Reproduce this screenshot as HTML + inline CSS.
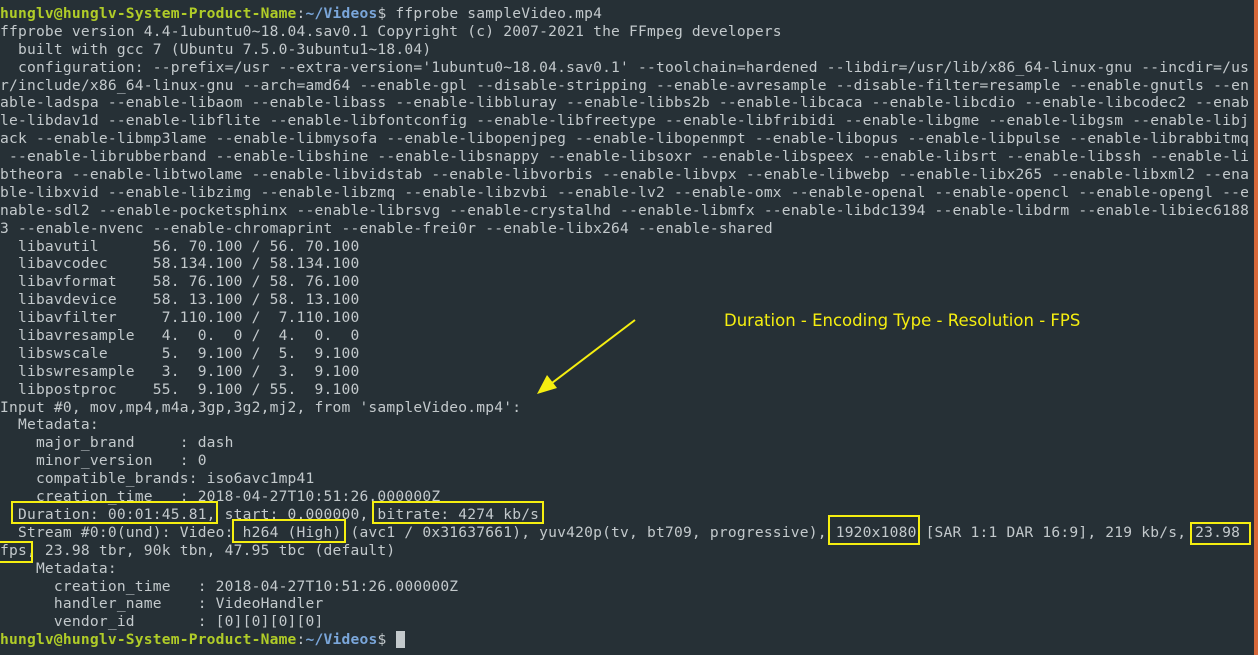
<!DOCTYPE html>
<html><head><meta charset="utf-8"><style>
html,body{margin:0;padding:0;}
body{width:1258px;height:655px;background:#263036;position:relative;overflow:hidden;}
.t{position:absolute;left:0;top:5px;font-family:"DejaVu Sans Mono","Liberation Mono",monospace;font-size:14.6px;line-height:17.9px;color:#c3c9cc;letter-spacing:0.2px;}
.t div{height:17.9px;white-space:pre;}
.u{color:#b0cc28;font-weight:bold;}
.p{color:#7aa6da;font-weight:bold;}
.b{position:absolute;border:2px solid #f5ee10;box-sizing:border-box;}
.edge{position:absolute;right:0;top:0;width:4px;height:655px;background:#d9693a;}
.note{position:absolute;left:724px;top:311px;font-family:"DejaVu Sans","Liberation Sans",sans-serif;font-size:16.5px;color:#f5ee10;white-space:nowrap;}
.cur{position:absolute;left:396px;top:631px;width:9px;height:17px;background:#c3c9cc;}
</style></head><body>
<div class="t"><div><span class="u">hunglv@hunglv-System-Product-Name</span>:<span class="p">~/Videos</span>$ ffprobe sampleVideo.mp4</div><div>ffprobe version 4.4-1ubuntu0~18.04.sav0.1 Copyright (c) 2007-2021 the FFmpeg developers</div><div>  built with gcc 7 (Ubuntu 7.5.0-3ubuntu1~18.04)</div><div>  configuration: --prefix=/usr --extra-version='1ubuntu0~18.04.sav0.1' --toolchain=hardened --libdir=/usr/lib/x86_64-linux-gnu --incdir=/us</div><div>r/include/x86_64-linux-gnu --arch=amd64 --enable-gpl --disable-stripping --enable-avresample --disable-filter=resample --enable-gnutls --en</div><div>able-ladspa --enable-libaom --enable-libass --enable-libbluray --enable-libbs2b --enable-libcaca --enable-libcdio --enable-libcodec2 --enab</div><div>le-libdav1d --enable-libflite --enable-libfontconfig --enable-libfreetype --enable-libfribidi --enable-libgme --enable-libgsm --enable-libj</div><div>ack --enable-libmp3lame --enable-libmysofa --enable-libopenjpeg --enable-libopenmpt --enable-libopus --enable-libpulse --enable-librabbitmq</div><div> --enable-librubberband --enable-libshine --enable-libsnappy --enable-libsoxr --enable-libspeex --enable-libsrt --enable-libssh --enable-li</div><div>btheora --enable-libtwolame --enable-libvidstab --enable-libvorbis --enable-libvpx --enable-libwebp --enable-libx265 --enable-libxml2 --ena</div><div>ble-libxvid --enable-libzimg --enable-libzmq --enable-libzvbi --enable-lv2 --enable-omx --enable-openal --enable-opencl --enable-opengl --e</div><div>nable-sdl2 --enable-pocketsphinx --enable-librsvg --enable-crystalhd --enable-libmfx --enable-libdc1394 --enable-libdrm --enable-libiec6188</div><div>3 --enable-nvenc --enable-chromaprint --enable-frei0r --enable-libx264 --enable-shared</div><div>  libavutil      56. 70.100 / 56. 70.100</div><div>  libavcodec     58.134.100 / 58.134.100</div><div>  libavformat    58. 76.100 / 58. 76.100</div><div>  libavdevice    58. 13.100 / 58. 13.100</div><div>  libavfilter     7.110.100 /  7.110.100</div><div>  libavresample   4.  0.  0 /  4.  0.  0</div><div>  libswscale      5.  9.100 /  5.  9.100</div><div>  libswresample   3.  9.100 /  3.  9.100</div><div>  libpostproc    55.  9.100 / 55.  9.100</div><div>Input #0, mov,mp4,m4a,3gp,3g2,mj2, from 'sampleVideo.mp4':</div><div>  Metadata:</div><div>    major_brand     : dash</div><div>    minor_version   : 0</div><div>    compatible_brands: iso6avc1mp41</div><div>    creation_time   : 2018-04-27T10:51:26.000000Z</div><div>  Duration: 00:01:45.81, start: 0.000000, bitrate: 4274 kb/s</div><div>  Stream #0:0(und): Video: h264 (High) (avc1 / 0x31637661), yuv420p(tv, bt709, progressive), 1920x1080 [SAR 1:1 DAR 16:9], 219 kb/s, 23.98</div><div>fps, 23.98 tbr, 90k tbn, 47.95 tbc (default)</div><div>    Metadata:</div><div>      creation_time   : 2018-04-27T10:51:26.000000Z</div><div>      handler_name    : VideoHandler</div><div>      vendor_id       : [0][0][0][0]</div><div><span class="u">hunglv@hunglv-System-Product-Name</span>:<span class="p">~/Videos</span>$ </div></div>
<div class="cur"></div>
<div class="b" style="left:11px;top:501px;width:207px;height:23px"></div>
<div class="b" style="left:372px;top:501px;width:172px;height:23px"></div>
<div class="b" style="left:232px;top:519px;width:114px;height:24px"></div>
<div class="b" style="left:828px;top:515px;width:92px;height:30px"></div>
<div class="b" style="left:1190px;top:522px;width:61px;height:23px"></div>
<div class="b" style="left:-2px;top:541px;width:35px;height:22px"></div>
<div class="note">Duration - Encoding Type - Resolution - FPS</div>
<svg style="position:absolute;left:0;top:0" width="1258" height="655">
<line x1="635" y1="320" x2="552" y2="383" stroke="#f5ee10" stroke-width="2"/>
<polygon points="537,394 547,375 557,388" fill="#f5ee10"/>
</svg>
<div class="edge"></div>
</body></html>
